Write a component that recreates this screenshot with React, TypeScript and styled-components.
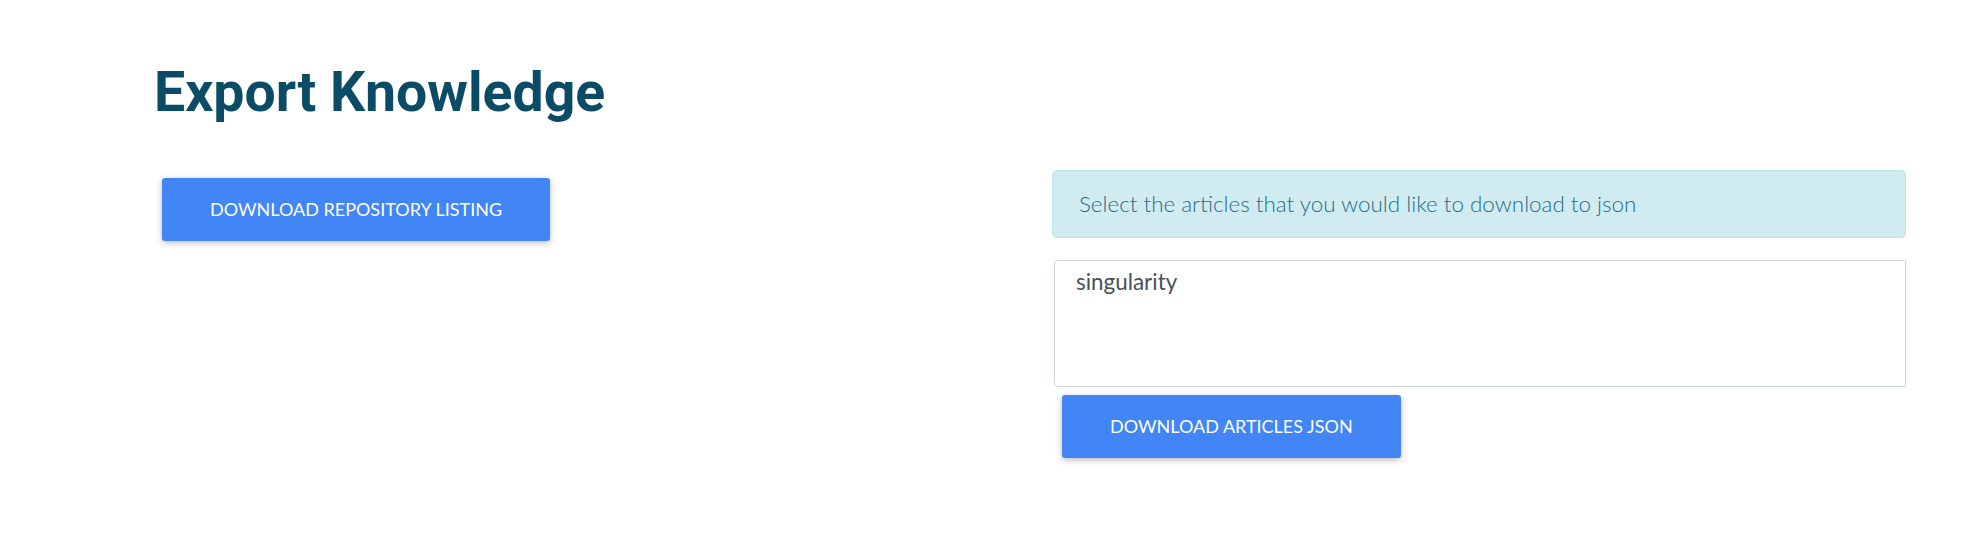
import React from "react";
import styled, { createGlobalStyle } from "styled-components";

const GlobalStyle = createGlobalStyle`
  html, body {
    margin: 0;
    padding: 0;
    background: #ffffff;
  }
  body {
    font-family: "Lato", "Liberation Sans", sans-serif;
  }
  * { box-sizing: border-box; }
`;

const Page = styled.main`
  width: 1970px;
  height: 548px;
  padding: 59px 64px 0 152px;
  background: #ffffff;
`;

const Title = styled.h1`
  margin: 0 0 7px 2px;
  font-family: "Roboto", "Liberation Sans", sans-serif;
  font-weight: 700;
  font-size: 55.4px;
  line-height: 68px;
  color: #0a4c66;
`;

const Row = styled.div`
  display: grid;
  grid-template-columns: 1fr 854px;
  margin-top: 43px;
`;

const Column = styled.section<{ $padTop?: number }>`
  display: flex;
  flex-direction: column;
  align-items: flex-start;
  padding-top: ${(p) => p.$padTop ?? 0}px;
`;

const Button = styled.button`
  margin: 0 0 0 10px;
  padding: 18px 48px;
  border: 0;
  border-radius: 3px;
  background: #4285f4;
  color: #ffffff;
  font-family: "Lato", "Liberation Sans", sans-serif;
  font-weight: 400;
  font-size: 18px;
  line-height: 27px;
  text-transform: uppercase;
  box-shadow: 0 2px 5px 0 rgba(0, 0, 0, 0.16), 0 2px 10px 0 rgba(0, 0, 0, 0.12);
  cursor: pointer;
`;

const Alert = styled.div`
  width: 100%;
  padding: 16px 26px;
  background: #d1ecf1;
  border: 1px solid #bee5eb;
  border-radius: 5px;
  color: #1c6f87;
  font-family: "Lato", "Liberation Sans", sans-serif;
  font-weight: 300;
  font-size: 22.4px;
  line-height: 34px;
`;

const TextArea = styled.textarea`
  width: calc(100% - 2px);
  height: 127px;
  margin: 22px 0 0 2px;
  padding: 4px 21px;
  border: 1px solid #ced4da;
  border-radius: 4px 0 0 4px;
  resize: none;
  color: #495057;
  background: #ffffff;
  font-family: "Lato", "Liberation Sans", sans-serif;
  font-size: 22.4px;
  line-height: 1.5;
  outline: none;
`;

const ArticlesButton = styled(Button)`
  margin-top: 8px;
`;

export default function App() {
  return (
    <>
      <GlobalStyle />
      <Page>
        <Title>Export Knowledge</Title>
        <Row>
          <Column $padTop={8}>
            <Button>Download Repository Listing</Button>
          </Column>
          <Column>
            <Alert>Select the articles that you would like to download to json</Alert>
            <TextArea defaultValue="singularity" />
            <ArticlesButton>Download Articles JSON</ArticlesButton>
          </Column>
        </Row>
      </Page>
    </>
  );
}
